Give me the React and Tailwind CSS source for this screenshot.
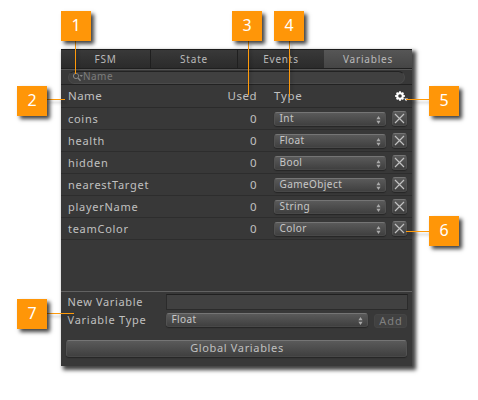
const variables = [
  ["coins", "Int"],
  ["health", "Float"],
  ["hidden", "Bool"],
  ["nearestTarget", "GameObject"],
  ["playerName", "String"],
  ["teamColor", "Color"],
];

const callouts = [
  { n: 1, box: "left-[61px] top-[11px]", line: "left-[75px] top-[41px] w-px h-[33px]" },
  { n: 2, box: "left-[17px] top-[86px]", line: "left-[47px] top-[99px] w-[18px] h-px" },
  { n: 3, box: "left-[232px] top-[11px]", line: "left-[248px] top-[41px] w-px h-[54px]" },
  { n: 4, box: "left-[274px] top-[11px]", line: "left-[289px] top-[41px] w-px h-[56px]" },
  { n: 5, box: "left-[429px] top-[86px]", line: "left-[406px] top-[99px] w-[23px] h-px" },
  { n: 6, box: "left-[429px] top-[216px]", line: "left-[406px] top-[231px] w-[23px] h-px" },
  { n: 7, box: "left-[17px] top-[299px]", line: "left-[47px] top-[313px] w-[27px] h-px" },
];

const raised =
  "bg-linear-to-b from-[#5a5a5a] to-[#404040] border border-t-[#757575] border-x-[#525252] border-b-[#484848] shadow-[0_1px_1px_#262626]";

function Popup({ label, className }) {
  return (
    <div className={`flex h-[14px] items-center justify-between rounded-[3px] pl-[4.5px] pr-[4px] text-[10px] leading-[12px] text-[#c8c8c8] ${raised} ${className}`}>
      <span className="mb-[2px] tracking-[0.42px]">{label}</span>
      <svg width="5" height="8" viewBox="0 0 5 8" className="mt-px fill-[#aaa]">
        <path d="M2.5 0 4.6 3.3H.4ZM2.5 8 .4 4.7h4.2Z" />
      </svg>
    </div>
  );
}

function Tab({ label, className }) {
  return (
    <div className={`flex items-center justify-center text-[10px] tracking-[0.8px] text-[#bababa] ${className}`}>
      {label}
    </div>
  );
}

function Gear() {
  return (
    <svg width="13" height="12" viewBox="0 0 13 12" className="mt-px">
      <g stroke="#fff" fill="none">
        <circle cx="5" cy="5" r="2.8" strokeWidth="2" />
        <path d="M5 .2v1.7M5 8.1v1.7M.2 5h1.7M8.1 5h1.7M1.6 1.6l1.2 1.2M7.2 7.2l1.2 1.2M8.4 1.6l-1.2 1.2M2.8 7.2l-1.2 1.2" strokeWidth="1.9" />
      </g>
      <path d="M9.2 7.6H13L11.1 10.2Z" fill="#fff" />
    </svg>
  );
}

export default function App() {
  return (
    <div className="relative h-[400px] w-[478px] overflow-hidden bg-white pl-[61px] pt-[49px] font-['Noto_Sans',sans-serif] text-[11px] leading-[14px] text-[#c0c0c0]">
      <div className="flex h-[317px] w-[351px] flex-col bg-[#383838] shadow-[3px_3px_4px_1px_rgba(0,0,0,0.75)]">
        <div className="flex h-[20px] border-t border-b border-t-[#1c1c1c] border-b-[#1f1f1f] bg-linear-to-b from-[#393939] to-[#2b2b2b]">
          <Tab label="FSM" className="w-[90px] border-r border-[#1f1f1f]" />
          <Tab label="State" className="w-[87px] border-r border-[#1f1f1f]" />
          <Tab label="Events" className="w-[86px]" />
          <Tab label="Variables" className="w-[88px] bg-linear-to-b from-[#565656] to-[#454545]" />
        </div>
        <div className="flex h-[16px] items-center border-t border-b border-t-[#555] border-b-[#222] bg-[#383838] px-[7px]">
          <div className="flex h-[13px] w-full items-center rounded-full border border-[#4a4a4a] border-t-[#232323] bg-[#404040] pl-[3px] text-[10px] leading-[11px] text-[#7c7c7c]">
            <svg width="12" height="10" viewBox="0 0 12 10" fill="none" stroke="#888">
              <circle cx="4" cy="4" r="2.6" />
              <path d="m6 6 2.5 2.7" strokeWidth="1.4" />
              <path d="M7.5 3h3.4l-1.7 2Z" fill="#888" stroke="none" />
            </svg>
            <span className="-ml-px mb-px tracking-[0.45px]">Name</span>
          </div>
        </div>
        <div className="flex h-[23px] items-center border-b border-[#2b2b2b] pl-[7px] text-[11.5px]">
          <span className="w-[120px] tracking-[0.4px]">Name</span>
          <span className="w-[69px] text-right tracking-[0.5px]">Used</span>
          <span className="ml-[17px] w-[121px] tracking-[0.75px]">Type</span>
          <Gear />
        </div>
        {variables.map(([name, type]) => (
          <div key={name} className="flex h-[22px] items-start border-b border-[#2d2d2d] pl-[7px]">
            <span className="mt-[4px] w-[120px] tracking-[0.72px]">{name}</span>
            <span className="mt-[4px] w-[68.5px] text-right text-[11.5px]">0</span>
            <Popup label={type} className="ml-[17.5px] mt-[4px] w-[112px]" />
            <div className={`ml-[6px] mt-[3px] flex h-[15px] w-[15px] items-center justify-center rounded-[3px] ${raised}`}>
              <svg width="11" height="11" viewBox="0 0 11 11" stroke="#c0c0c0" strokeWidth="1.2">
                <path d="m1 1 9 9M10 1l-9 9" />
              </svg>
            </div>
          </div>
        ))}
        <div className="flex-1" />
        <div className="h-[75px] border-t border-[#626262] pl-[6px] pr-[4px]">
          <div className="flex h-[20px] items-start">
            <span className="mt-[3px] w-[99px] pl-[0.5px] tracking-[0.65px]">New Variable</span>
            <div className="mt-[2px] h-[16px] w-[242px] border border-[#2b2b2b] border-t-[#202020] bg-[#414141]" />
          </div>
          <div className="flex h-[28px] items-start">
            <span className="mt-px w-[99px] pl-[0.5px] tracking-[0.75px]">Variable Type</span>
            <Popup label="Float" className="mt-px w-[202px]" />
            <div className="ml-[6px] mt-[2px] flex h-[14px] w-[33px] items-center justify-center rounded-[3px] border border-[#454545] bg-[#414141] pl-px tracking-[1px] text-[#808080]">
              Add
            </div>
          </div>
          <div className={`-ml-px flex h-[17px] w-[341px] items-center justify-center rounded-[3px] pb-[2px] pl-px tracking-[0.65px] text-[#c0c0c0] ${raised}`}>
            Global Variables
          </div>
        </div>
      </div>
      {callouts.map(({ n, box, line }) => (
        <div key={n}>
          <div className={`absolute bg-[#ff9a0a] shadow-[2px_3px_3px_rgba(0,0,0,0.3)] ${line}`} />
          <div className={`absolute flex h-[30px] w-[30px] items-center justify-center bg-[#ff9608] pb-[2px] text-[16px] text-white shadow-[3px_3px_4px_rgba(0,0,0,0.75)] ${box}`}>
            {n}
          </div>
        </div>
      ))}
    </div>
  );
}
